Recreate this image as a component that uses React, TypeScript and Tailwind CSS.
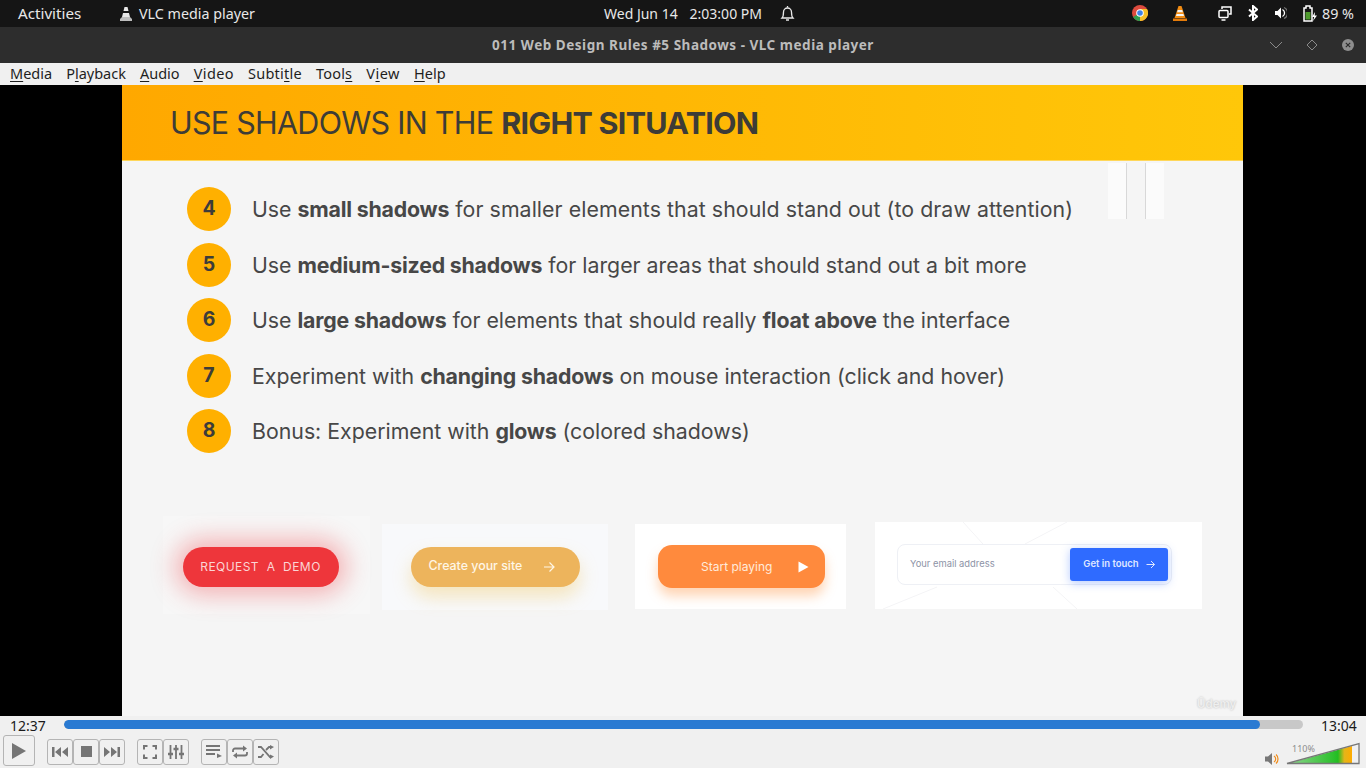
import React from "react";

const sys = { fontFamily: '"Noto Sans", "Open Sans", sans-serif' };
const inter = { fontFamily: 'Inter, "Liberation Sans", sans-serif' };

function Ctl({ w = 26, children, play = false }: { w?: number; children: React.ReactNode; play?: boolean }) {
  return (
    <div
      className={`flex items-center justify-center rounded-[3px] border border-[#b4b4b4] bg-[#f0f0f0] ${play ? "h-[31px]" : "h-[26px] mt-[2px]"}`}
      style={{ width: w }}
    >
      {children}
    </div>
  );
}

const B = ({ children }: { children: React.ReactNode }) => (
  <b className="font-bold tracking-[-0.18px]">{children}</b>
);

const Row = ({ n, children }: { n: number; children: React.ReactNode }) => (
  <div className="flex items-center h-[44px] mb-[11.5px]">
    <div className="w-[44px] h-[44px] rounded-full bg-[#ffb000] flex items-center justify-center text-[19.5px] font-bold text-[#3c3c3a] shrink-0">
      {n}
    </div>
    <div className="ml-[21px] pt-[2px] text-[21.3px] text-[#474747] whitespace-nowrap">{children}</div>
  </div>
);

function Menu({ a, u, b, cls = "" }: { a: string; u: string; b: string; cls?: string }) {
  return (
    <span className={cls}>
      {a}
      <span className="underline decoration-1 underline-offset-2">{u}</span>
      {b}
    </span>
  );
}

export default function App() {
  return (
    <div className="w-[1366px] h-[768px] overflow-hidden flex flex-col bg-black" style={sys}>
      {/* GNOME top bar */}
      <div className="h-[27px] bg-[#151515] text-[#e8e8e8] text-[14.3px] flex items-center relative shrink-0">
        <span className="ml-[18px] w-[63px] text-[15.2px]">Activities</span>
        <svg className="ml-[38px]" width="14" height="16" viewBox="0 0 14 16">
          <path d="M5.500 1h3l1 4h-5zM4 7h6l1 4H3z" fill="#e8e8e8" />
          <path d="M1 13l2-2h8l2 2v2H1z" fill="#bdbdbd" />
        </svg>
        <span className="ml-[6px]">VLC media player</span>
        <span className="absolute left-[604px] top-[3px] text-[14px]">Wed Jun 14&nbsp;&nbsp;&nbsp;<span className="ml-[1px]">2:03:00 PM</span></span>
        <svg className="absolute left-[780px] top-[5px]" width="15" height="17" viewBox="0 0 15 17" fill="none" stroke="#e8e8e8" strokeWidth="1.300">
          <path d="M2 13c1.500-1.500 1.500-3 1.500-6a4 4 0 0 1 8 0c0 3 0 4.500 1.500 6z" />
          <path d="M6 15h3M7.500 1v1.500" />
        </svg>
        <svg className="absolute left-[1132px] top-[5px]" width="16" height="16" viewBox="0 0 16 16">
          <circle cx="8" cy="8" r="8" fill="#dd4b3e" />
          <path d="M8 8L1.100 12A8 8 0 0 0 8.800 16z" fill="#2e9e4f" />
          <path d="M8 8V16A8 8 0 0 0 15 4H8z" fill="#f6c026" />
          <circle cx="8" cy="8" r="3.800" fill="#fff" />
          <circle cx="8" cy="8" r="2.800" fill="#3f83e6" />
        </svg>
        <svg className="absolute left-[1173px] top-[5px]" width="14" height="16" viewBox="0 0 14 16">
          <path d="M5.500 1h3l4 12H1.500z" fill="#f28c13" />
          <path d="M4.800 5h4.400l.7 2.300H4.100zM3.600 9h6.800l.6 2H3z" fill="#f4f4f4" />
          <path d="M0 13.500h14V16H0z" fill="#e47b0a" />
        </svg>
        <svg className="absolute left-[1218px] top-[6px]" width="14" height="15" viewBox="0 0 14 15" fill="none" stroke="#fff" strokeWidth="1.500">
          <path d="M4 3V1h9v7h-2" />
          <rect x="1" y="4.500" width="9" height="7" rx="1" fill="#151515" />
          <path d="M3.500 14h4" />
        </svg>
        <svg className="absolute left-[1248px] top-[5px]" width="10" height="16" viewBox="0 0 10 16" fill="none" stroke="#fff" strokeWidth="2">
          <path d="M1 4.500l8 7-4 3.500V1l4 3.500-8 7" />
        </svg>
        <svg className="absolute left-[1275px] top-[6px]" width="12" height="14" viewBox="0 0 12 14">
          <path d="M0 5h2.500L6 1.500v11L2.500 9H0z" fill="#fff" />
          <path d="M7.500 3.500a4 4 0 0 1 0 7" fill="none" stroke="#fff" strokeWidth="1.300" />
          <path d="M9 1.500a6 6 0 0 1 0 11" fill="none" stroke="#777" strokeWidth="1.300" />
        </svg>
        <svg className="absolute left-[1303px] top-[5px]" width="15" height="17" viewBox="0 0 15 17">
          <path d="M1 3h2V1h4v2h2v13H1z" fill="none" stroke="#fff" strokeWidth="1.500" />
          <path d="M2.500 7h5v7.500h-5z" fill="#4e9a2c" />
          <path d="M12 7l-3 5h2.200L10 16l4-5.500h-2.300z" fill="#fff" />
        </svg>
        <span className="absolute left-[1322px] top-[3px]">89 %</span>
      </div>

      {/* Title bar */}
      <div className="h-[36px] bg-[#2d2d2d] flex items-center relative shrink-0">
        <span className="w-full text-center text-[13.5px] font-bold text-[#bcbcbc] tracking-[0.52px]">
          011 Web Design Rules #5 Shadows - VLC media player
        </span>
        <svg className="absolute left-[1269px] top-[14px]" width="14" height="8" viewBox="0 0 14 8" fill="none" stroke="#8a8a8a" strokeWidth="1">
          <path d="M1 1l6 6 6-6" />
        </svg>
        <svg className="absolute left-[1306px] top-[12px]" width="12" height="12" viewBox="0 0 12 12" fill="none" stroke="#8a8a8a" strokeWidth="1">
          <path d="M6 1l5 5-5 5-5-5z" />
        </svg>
        <svg className="absolute left-[1342px] top-[12px]" width="12" height="12" viewBox="0 0 12 12">
          <circle cx="6" cy="6" r="6" fill="#8e8e8e" />
          <path d="M3.800 3.800l4.400 4.400M8.200 3.800l-4.400 4.400" stroke="#2d2d2d" strokeWidth="1.200" />
        </svg>
      </div>

      {/* Menu bar */}
      <div className="h-[22px] bg-[#f0f0f0] text-[#1e1e1e] text-[14.5px] flex items-center shrink-0 pl-[10px] pb-[2px] gap-[14px] leading-none">
        <Menu a="" u="M" b="edia" />
        <Menu a="P" u="l" b="ayback" />
        <Menu a="" u="A" b="udio" />
        <Menu a="" u="V" b="ideo" cls="tracking-[0.4px]" />
        <Menu a="Subti" u="t" b="le" cls="tracking-[0.25px]" />
        <Menu a="Tool" u="s" b="" cls="tracking-[0.2px]" />
        <Menu a="V" u="i" b="ew" cls="tracking-[0.5px]" />
        <Menu a="" u="H" b="elp" />
      </div>

      {/* Video area */}
      <div className="h-[631px] flex justify-center bg-black shrink-0">
        <div className="w-[1121px] h-full bg-[#f5f5f5] relative ml-[-1px]" style={inter}>
          <div className="h-[76px] bg-gradient-to-r from-[#ffa800] to-[#ffc709] flex items-center pl-[48px] border-b border-[#ffd75a]">
            <div className="text-[30.5px] text-[#3d3c37] tracking-[-0.73px] whitespace-nowrap">
              USE SHADOWS IN THE <b className="font-bold">RIGHT SITUATION</b>
            </div>
          </div>

          <div className="absolute left-[986px] top-[78px] w-[56px] h-[56px] flex">
            <div className="w-[19px] bg-[#fbfbfb] border-r border-[#d8d8d8]" />
            <div className="w-[19px] border-r border-[#d8d8d8]" />
            <div className="w-[18px] bg-[#fbfbfb]" />
          </div>

          <div className="pl-[65px] pt-[26px]">
            <Row n={4}>
              Use <B>small shadows</B> <span className="tracking-[0.07px]">for smaller elements that should stand out (to draw attention)</span>
            </Row>
            <Row n={5}>
              Use <B>medium-sized shadows</B> for larger areas that should stand out a bit more
            </Row>
            <Row n={6}>
              Use <B>large shadows</B> for elements that should really <B>float above</B> the interface
            </Row>
            <Row n={7}>
              Experiment with <B>changing shadows</B> on mouse interaction (click and hover)
            </Row>
            <Row n={8}>
              Bonus: Experiment with <B>glows</B> (colored shadows)
            </Row>
          </div>

          <div className="flex items-start pl-[41px] mt-[63px]">
            <div className="w-[207px] h-[98px] bg-[#f7f7f7] flex items-center justify-center pr-[12px] pt-[4px]">
              <div className="w-[156px] h-[40px] rounded-full bg-[#ee363b] shadow-[0_0_24px_8px_rgba(238,54,59,0.35)] flex items-center justify-center text-[12px] text-[#fbd5d5] tracking-[0.45px] whitespace-pre">
                REQUEST  A  DEMO
              </div>
            </div>
            <div className="w-[226px] h-[86px] ml-[12px] mt-[8px] bg-[#f8f9fb] flex items-center justify-center pb-[1px]">
              <div className="w-[169px] h-[40px] rounded-full bg-[#edb45c] shadow-[0_10px_18px_rgba(240,200,100,0.4)] flex items-center pl-[18px] text-[12.4px] font-medium text-[#fff6e6] whitespace-nowrap">
                Create your site
                <svg className="ml-[21px]" width="12" height="12" viewBox="0 0 12 12" fill="none" stroke="#fff6e6" strokeWidth="1.200">
                  <path d="M1 6h10M6.500 1.500L11 6l-4.500 4.500" />
                </svg>
              </div>
            </div>
            <div className="w-[211px] h-[85px] ml-[27px] mt-[8px] bg-white flex items-center justify-center pl-[2px]">
              <div className="w-[167px] h-[43px] rounded-[14px] bg-[#ff8a3d] shadow-[0_8px_12px_rgba(255,150,70,0.4)] flex items-center pl-[43px] text-[12px] text-[#ffeadb] whitespace-nowrap">
                Start playing
                <svg className="ml-[26px]" width="11" height="12" viewBox="0 0 11 12">
                  <path d="M0.500 0.500L10.500 6 0.500 11.500z" fill="#fff" />
                </svg>
              </div>
            </div>
            <div className="w-[327px] h-[87px] ml-[29px] mt-[6px] bg-white relative flex items-center pl-[22px] pb-[2px]">
              <svg className="absolute inset-0" width="327" height="87" viewBox="0 0 327 87" fill="none" stroke="#f4f4f6" strokeWidth="1">
                <path d="M88 0l20 22M192 0l-42 22M62 65L8 87M178 65l24 22" />
              </svg>
              <div className="w-[275px] h-[41px] rounded-[8px] border border-[#eef0f5] bg-white flex items-center justify-between pl-[12px] pr-[3px] relative">
                <span className="text-[9.400px] text-[#8d93a6]">Your email address</span>
                <div className="w-[98px] h-[33px] rounded-[3px] bg-[#2f6bff] shadow-[0_2px_10px_rgba(47,107,255,0.35)] flex items-center justify-center text-[9.500px] font-semibold text-[#dfe7ff] whitespace-nowrap">
                  Get in touch
                  <svg className="ml-[7px]" width="9" height="9" viewBox="0 0 9 9" fill="none" stroke="#dfe7ff" strokeWidth="1">
                    <path d="M0.500 4.500h8M5 1l3.500 3.500L5 8" />
                  </svg>
                </div>
              </div>
            </div>
          </div>

          <span className="absolute left-[1075px] top-[611px] text-[11.5px] text-[#eeeeee] font-semibold [text-shadow:0_0_2px_#b5b5b5]">Ūdemy</span>
        </div>
      </div>

      {/* Controls */}
      <div className="h-[52px] bg-[#f0f0f0] shrink-0 relative">
        <div className="h-[18px] flex items-center text-[14px] text-[#1a1a1a]">
          <span className="ml-[10px] w-[54px]">12:37</span>
          <div className="w-[1239px] h-[9px] rounded-full bg-[#c8c8c8] overflow-hidden mb-[2px]">
            <div className="h-full w-[1196px] bg-[#2a7ad2] rounded-full" />
          </div>
          <span className="ml-[18px]">13:04</span>
        </div>
        <div className="flex items-center pl-[3px] mt-[1px] text-[#6e6e6e]">
          <Ctl w={32} play>
            <svg width="16" height="18" viewBox="0 0 16 18"><path d="M1 1l14 8-14 8z" fill="#757575" /></svg>
          </Ctl>
          <div className="w-[12px]" />
          <Ctl>
            <svg width="16" height="10" viewBox="0 0 16 10" fill="#757575"><path d="M0 0h2.500v10H0zM9 0v10L3 5zM16 0v10L10 5z" /></svg>
          </Ctl>
          <Ctl>
            <svg width="11" height="11" viewBox="0 0 11 11"><path d="M0 0h11v11H0z" fill="#757575" /></svg>
          </Ctl>
          <Ctl>
            <svg width="16" height="10" viewBox="0 0 16 10" fill="#757575"><path d="M16 0h-2.500v10H16zM7 0v10l6-5zM0 0v10l6-5z" /></svg>
          </Ctl>
          <div className="w-[12px]" />
          <Ctl>
            <svg width="14" height="14" viewBox="0 0 14 14" fill="none" stroke="#757575" strokeWidth="2"><path d="M1 4.500V1h3.500M9.500 1H13v3.500M13 9.500V13H9.500M4.500 13H1V9.500" /></svg>
          </Ctl>
          <Ctl>
            <svg width="16" height="14" viewBox="0 0 16 14" stroke="#757575" fill="#757575" strokeWidth="1.800"><path d="M2.500 0v14M8 0v14M13.500 0v14" /><path d="M0 9h5M5.500 4h5M11 9h5" strokeWidth="2.600" /></svg>
          </Ctl>
          <div className="w-[12px]" />
          <Ctl>
            <svg width="16" height="13" viewBox="0 0 16 13" stroke="#757575" strokeWidth="1.800" fill="none"><path d="M0 1h14M0 5h14M0 9h9" /><path d="M11 8.500l5 2.500-5 2z" fill="#757575" stroke="none" /></svg>
          </Ctl>
          <Ctl>
            <svg width="16" height="14" viewBox="0 0 16 14" fill="none" stroke="#757575" strokeWidth="1.800"><path d="M1 7V5.500a2 2 0 0 1 2-2h10M15 7v1.500a2 2 0 0 1-2 2H3" /><path d="M11 0.500v6l4-3zM5 7.500v6l-4-3z" fill="#757575" stroke="none" /></svg>
          </Ctl>
          <Ctl>
            <svg width="16" height="14" viewBox="0 0 16 14" fill="none" stroke="#757575" strokeWidth="1.800"><path d="M0 2h3l9 10h1M0 12h3l2.500-3M8 5l3-3h2" /><path d="M12 0v4.500L16 2zM12 9.500V14l4-2.500z" fill="#757575" stroke="none" /></svg>
          </Ctl>
        </div>
        <svg className="absolute left-[1265px] top-[37px]" width="15" height="12" viewBox="0 0 15 12">
          <path d="M0 3.500h3L7 0v12L3 8.500H0z" fill="#777" />
          <path d="M9 3a3.500 3.500 0 0 1 0 6M11 1.500a6 6 0 0 1 0 9" fill="none" stroke="#f08c1a" strokeWidth="1.200" />
        </svg>
        <span className="absolute left-[1292px] top-[26px] text-[9px] text-[#8d8d8d]">110%</span>
        <svg className="absolute left-[1286px] top-[26px]" width="75" height="23" viewBox="0 0 75 23">
          <defs>
            <linearGradient id="vg" x1="0" x2="1" y1="0" y2="0">
              <stop offset="0" stopColor="#8fd58f" />
              <stop offset="0.7" stopColor="#2fc12f" />
              <stop offset="0.78" stopColor="#22bd22" />
              <stop offset="0.88" stopColor="#e4b51a" />
              <stop offset="1" stopColor="#ffab00" />
            </linearGradient>
          </defs>
          <path d="M2 21.500L66 4v17.500z" fill="url(#vg)" />
          <path d="M1 21.500L73 1.500v20z" fill="none" stroke="#777" strokeWidth="1.300" />
        </svg>
      </div>
    </div>
  );
}
